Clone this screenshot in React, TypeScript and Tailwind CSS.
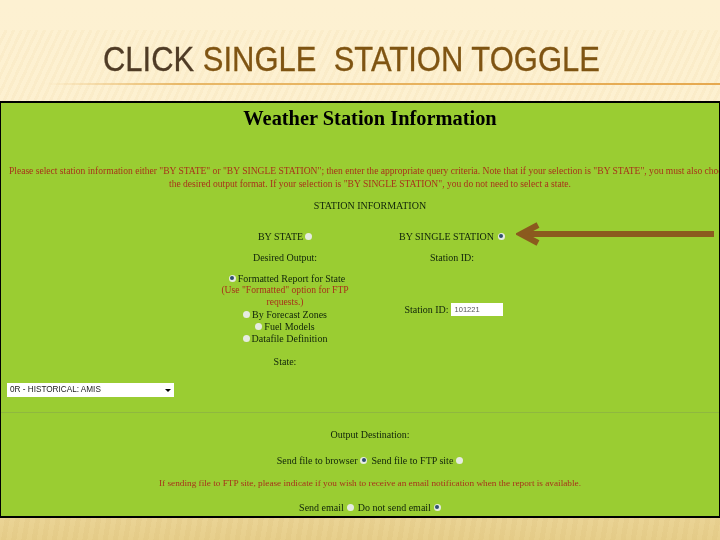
import React from "react";

function Radio({ on = false }: { on?: boolean }) {
  return (
    <span className="inline-flex w-[7px] h-[7px] rounded-full bg-[#e6ebe2] items-center justify-center align-[0px] shrink-0">
      {on && <span className="w-[4px] h-[4px] rounded-full bg-[#2f4f6f]" />}
    </span>
  );
}

function Line({ h = "h-[12px]", className = "", children }: { h?: string; className?: string; children: React.ReactNode }) {
  return (
    <div className={`${h} flex items-center justify-center gap-[2px] whitespace-nowrap ${className}`}>{children}</div>
  );
}

export default function App() {
  return (
    <div className="relative w-[720px] h-[540px] overflow-hidden flex flex-col bg-[linear-gradient(180deg,#fdf1d2_0%,#fdf0cf_40%,#f3e0ae_85%,#e7cf8c_100%)]">
      <div className="absolute inset-x-0 top-[30px] h-[72px] bg-[repeating-linear-gradient(115deg,transparent_0px,transparent_4px,rgba(226,190,120,0.09)_4px,rgba(226,190,120,0.09)_7px)]" />
      <div className="absolute inset-x-0 bottom-0 h-[23px] bg-[repeating-linear-gradient(100deg,transparent_0px,transparent_5px,rgba(190,150,70,0.07)_5px,rgba(190,150,70,0.07)_10px)]" />

      <header className="relative h-[101px] shrink-0 flex flex-col">
        <h1 className="h-[83px] pl-[103px] pt-[38px] text-[35px] leading-[41px] whitespace-pre font-['Liberation_Sans',sans-serif] text-[#7f5412] blur-[0.3px] [-webkit-text-stroke:0.3px_currentColor]">
          <span className="inline-block origin-left scale-x-[0.885]"><span className="text-[#4f3b25]">CLICK </span>SINGLE  STATION TOGGLE</span>
        </h1>
        <div className="ml-[45px] h-[2px] bg-[linear-gradient(90deg,transparent_0%,#e8b868_20%,#e6a94f_100%)]" />
      </header>

      <main className="relative h-[417px] shrink-0 border-y-2 border-x border-black bg-[#9acd32] overflow-hidden font-['Liberation_Serif',serif] text-[10px] text-[#10240a]">
        <div className="w-[738px] flex flex-col items-center blur-[0.35px]">
          <h2 className="mt-[3px] h-[24px] leading-[24px] text-[20.4px] font-bold text-black">Weather Station Information</h2>
          <div className="mt-[34px] text-[#a8321a] text-[9.55px] leading-[13px] text-center whitespace-nowrap">
            <p>Please select station information either "BY STATE" or "BY SINGLE STATION"; then enter the appropriate query criteria. Note that if your selection is "BY STATE", you must also choose</p>
            <p>the desired output format. If your selection is "BY SINGLE STATION", you do not need to select a state.</p>
          </div>
          <p className="mt-[10px] h-[12px] leading-[12px]">STATION INFORMATION</p>

          <div className="mt-[18px] self-start ml-[219px] flex gap-[42px]">
            <div className="w-[130px] flex flex-col text-center">
              <Line>BY STATE <Radio /></Line>
              <Line className="mt-[9px]">Desired Output:</Line>
              <Line className="mt-[9px] ml-[4px]"><Radio on /> Formatted Report for State</Line>
              <div className="text-[#a8321a] text-[9.6px] leading-[12px] whitespace-nowrap">
                <p>(Use "Formatted" option for FTP</p>
                <p>requests.)</p>
              </div>
              <Line><Radio /> By Forecast Zones</Line>
              <Line><Radio /> Fuel Models</Line>
              <Line><Radio /> Datafile Definition</Line>
              <Line className="mt-[11px]">State:</Line>
            </div>
            <div className="w-[120px] flex flex-col items-center">
              <Line className="gap-[4px]">BY SINGLE STATION <Radio on /></Line>
              <Line className="mt-[9px]">Station ID:</Line>
              <div className="mt-[40px] ml-[3px] h-[13px] flex items-center gap-[2px] whitespace-nowrap">
                Station ID:
                <span className="w-[52px] h-[13px] bg-white text-[7.5px] leading-[13px] pl-[4px] font-['Liberation_Sans',sans-serif] text-[#555]">101221</span>
              </div>
            </div>
          </div>

          <div className="self-start ml-[6px] mt-[16px] w-[167px] h-[14px] bg-white flex items-center justify-between pl-[3px] pr-[3px] text-[8.2px] font-['Liberation_Sans',sans-serif] text-[#222]">
            0R - HISTORICAL: AMIS
            <span className="w-0 h-0 border-x-[3px] border-x-transparent border-t-[3px] border-t-black" />
          </div>
        </div>

        <div className="mt-[15px] h-px bg-[#8fb83f]" />

        <div className="w-[738px] flex flex-col items-center blur-[0.35px]">
          <Line className="mt-[15px]">Output Destination:</Line>
          <Line className="mt-[14px] gap-[3px]">Send file to browser <Radio on /> <span className="ml-[1px]">Send file to FTP site</span> <Radio /></Line>
          <Line className="mt-[12px] text-[#a8321a] text-[9.25px]">If sending file to FTP site, please indicate if you wish to receive an email notification when the report is available.</Line>
          <Line className="mt-[11px] gap-[3px]">Send email <Radio /> <span className="ml-[1px]">Do not send email</span> <Radio on /></Line>
        </div>
      </main>

      <div className="absolute left-[516px] top-[222px]">
        <svg width="200" height="24" viewBox="0 0 200 24">
          <path d="M198 12H8" stroke="#8b5a1e" strokeWidth="6" fill="none" />
          <path d="M22 3L5 12L22 21" stroke="#8b5a1e" strokeWidth="6" fill="none" />
        </svg>
      </div>
    </div>
  );
}
